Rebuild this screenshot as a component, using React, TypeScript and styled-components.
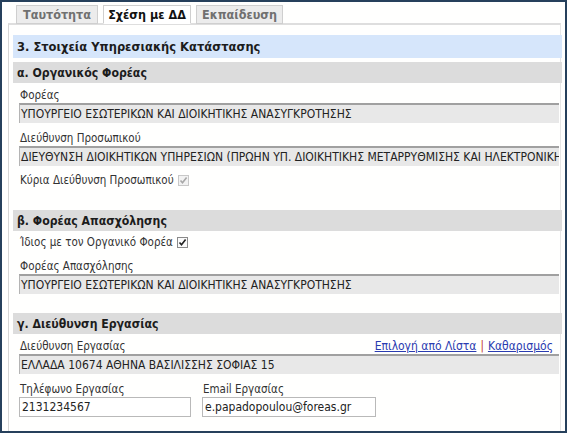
import React, { FC } from "react";
import styled, { createGlobalStyle } from "styled-components";

const GlobalStyle = createGlobalStyle`
  html, body { margin: 0; padding: 0; background: #ffffff; }
  body { font-family: "DejaVu Sans Condensed", "DejaVu Sans", sans-serif; color: #222; }
`;

const Frame = styled.div`
  box-sizing: border-box;
  width: 567px;
  height: 433px;
  border: 2px solid #26405c;
  background: #fffffe;
  padding: 3px 4px 0 6px;
  overflow: hidden;
`;

const Tabs = styled.div`
  display: flex;
  gap: 5px;
  padding-left: 8px;
  position: relative;
  z-index: 1;
`;

const Tab = styled.div<{ active?: boolean; w: number }>`
  box-sizing: border-box;
  height: 19px;
  width: ${({ w }) => w}px;
  border: 1px solid #cfcfcf;
  border-bottom: ${({ active }) => (active ? "1px solid #ffffff" : "1px solid #cfcfcf")};
  background: ${({ active }) => (active ? "#ffffff" : "#ececec")};
  color: ${({ active }) => (active ? "#111" : "#707070")};
  font-weight: bold;
  font-size: 12.5px;
  display: flex;
  align-items: center;
  justify-content: center;
`;

const Panel = styled.div`
  box-sizing: border-box;
  margin-top: -1px;
  border-top: 2px solid #dedede;
  border-left: 1px solid #d6d6d6;
  border-right: 1px solid #e6e6e6;
  height: 420px;
  padding: 10px 0 0 4px;
`;

const Heading = styled.div<{ tone: "blue" | "gray" }>`
  box-sizing: border-box;
  background: ${({ tone }) => (tone === "blue" ? "#d6e6fb" : "#dcdcdc")};
  height: ${({ tone }) => (tone === "blue" ? 23 : 21)}px;
  font-weight: bold;
  font-size: ${({ tone }) => (tone === "blue" ? 12.8 : 12.2)}px;
  color: #1c1c1c;
  display: flex;
  align-items: center;
  padding-left: 4px;
  width: 549px;
`;

const Section = styled.div<{ gap?: number }>`
  margin-top: ${({ gap }) => gap ?? 0}px;
`;

const Body = styled.div`
  padding: 2px 3px 0 6px;
  width: 540px;
`;

const LabelRow = styled.div`
  display: flex;
  justify-content: space-between;
  align-items: flex-end;
  font-size: 11.5px;
  line-height: 15px;
  height: 18px;
  color: #333;
  padding-left: 1px;
`;

const Field = styled.div`
  margin-bottom: 5px;
`;

const ReadOnly = styled.div`
  box-sizing: border-box;
  height: 20px;
  background: #e8e8e8;
  border-top: 2px solid #a0a0a0;
  border-left: 1px solid #b4b4b4;
  font-size: 12px;
  color: #222;
  display: flex;
  align-items: center;
  padding-left: 1px;
  white-space: nowrap;
  overflow: hidden;
`;

const TextInput = styled.div<{ w: number }>`
  box-sizing: border-box;
  width: ${({ w }) => w}px;
  height: 20px;
  border: 1px solid #b9b9b9;
  background: #fff;
  font-size: 12px;
  color: #222;
  display: flex;
  align-items: center;
  padding-left: 2px;
`;

const CheckRow = styled.div`
  display: flex;
  align-items: center;
  gap: 4px;
  font-size: 11.5px;
  color: #333;
  height: 18px;
  margin-bottom: 5px;
  padding-left: 1px;
`;

const Box = styled.span<{ disabled?: boolean }>`
  box-sizing: border-box;
  width: 11px;
  height: 11px;
  border: 1px solid ${({ disabled }) => (disabled ? "#c8c8c8" : "#8a8a8a")};
  background: ${({ disabled }) => (disabled ? "#f2f2f2" : "#fafafa")};
  display: inline-flex;
  align-items: center;
  justify-content: center;
`;

const Links = styled.div`
  display: flex;
  gap: 4px;
  align-items: center;
  padding-right: 6px;
`;

const Link = styled.a`
  color: #2a3bb0;
  text-decoration: underline;
  font-size: 12px;
`;

const Sep = styled.span`
  color: #c0392b;
`;

const Pair = styled.div`
  display: flex;
  gap: 11px;
`;

const Check: FC<{ disabled?: boolean }> = ({ disabled }) => (
  <Box disabled={disabled}>
    <svg width="9" height="9" viewBox="0 0 9 9">
      <path
        d="M1.5 4.5 L3.5 6.8 L7.6 1.6"
        fill="none"
        stroke={disabled ? "#a8a8a8" : "#222"}
        strokeWidth="1.6"
      />
    </svg>
  </Box>
);

const App: FC = () => (
  <>
    <GlobalStyle />
    <Frame>
      <Tabs>
        <Tab w={82}>Ταυτότητα</Tab>
        <Tab w={88} active>
          Σχέση με ΔΔ
        </Tab>
        <Tab w={87}>Εκπαίδευση</Tab>
      </Tabs>
      <Panel>
        <Heading tone="blue">3. Στοιχεία Υπηρεσιακής Κατάστασης</Heading>

        <Section gap={4}>
          <Heading tone="gray">α. Οργανικός Φορέας</Heading>
          <Body>
            <Field>
              <LabelRow>Φορέας</LabelRow>
              <ReadOnly>ΥΠΟΥΡΓΕΙΟ ΕΣΩΤΕΡΙΚΩΝ ΚΑΙ ΔΙΟΙΚΗΤΙΚΗΣ ΑΝΑΣΥΓΚΡΟΤΗΣΗΣ</ReadOnly>
            </Field>
            <Field>
              <LabelRow>Διεύθυνση Προσωπικού</LabelRow>
              <ReadOnly>
                ΔΙΕΥΘΥΝΣΗ ΔΙΟΙΚΗΤΙΚΩΝ ΥΠΗΡΕΣΙΩΝ (ΠΡΩΗΝ ΥΠ. ΔΙΟΙΚΗΤΙΚΗΣ ΜΕΤΑΡΡΥΘΜΙΣΗΣ ΚΑΙ ΗΛΕΚΤΡΟΝΙΚΗΣ ΔΙΑΚΥΒΕΡΝΗΣΗΣ)
              </ReadOnly>
            </Field>
            <CheckRow>
              Κύρια Διεύθυνση Προσωπικού <Check disabled />
            </CheckRow>
          </Body>
        </Section>

        <Section gap={21}>
          <Heading tone="gray">β. Φορέας Απασχόλησης</Heading>
          <Body>
            <CheckRow>
              Ίδιος με τον Οργανικό Φορέα <Check />
            </CheckRow>
            <Field>
              <LabelRow>Φορέας Απασχόλησης</LabelRow>
              <ReadOnly>ΥΠΟΥΡΓΕΙΟ ΕΣΩΤΕΡΙΚΩΝ ΚΑΙ ΔΙΟΙΚΗΤΙΚΗΣ ΑΝΑΣΥΓΚΡΟΤΗΣΗΣ</ReadOnly>
            </Field>
          </Body>
        </Section>

        <Section gap={19}>
          <Heading tone="gray">γ. Διεύθυνση Εργασίας</Heading>
          <Body>
            <Field>
              <LabelRow>
                Διεύθυνση Εργασίας
                <Links>
                  <Link>Επιλογή από Λίστα</Link>
                  <Sep>|</Sep>
                  <Link>Καθαρισμός</Link>
                </Links>
              </LabelRow>
              <ReadOnly>ΕΛΛΑΔΑ 10674 ΑΘΗΝΑ ΒΑΣΙΛΙΣΣΗΣ ΣΟΦΙΑΣ 15</ReadOnly>
            </Field>
            <Pair>
              <div>
                <LabelRow>Τηλέφωνο Εργασίας</LabelRow>
                <TextInput w={172}>2131234567</TextInput>
              </div>
              <div>
                <LabelRow>Email Εργασίας</LabelRow>
                <TextInput w={174}>e.papadopoulou@foreas.gr</TextInput>
              </div>
            </Pair>
          </Body>
        </Section>
      </Panel>
    </Frame>
  </>
);

export default App;
